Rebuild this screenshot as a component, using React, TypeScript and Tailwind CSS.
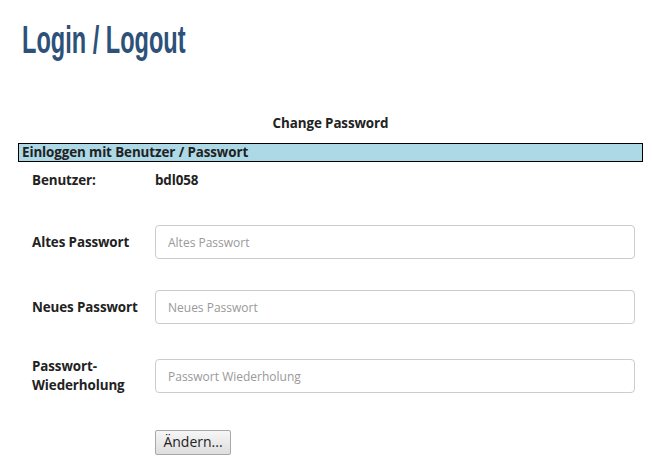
import React from "react";

const label = "font-['Open_Sans',sans-serif] font-bold text-[13.4px] text-[#222] tracking-[-0.1px]";

function Field({ lbl, ph, extra = "" }: { lbl: React.ReactNode; ph: string; extra?: string }) {
  return (
    <div className={`flex items-center ${extra}`}>
      <div className={`w-[137px] pl-[14px] leading-[19px] ${label}`}>{lbl}</div>
      <input
        type="text"
        placeholder={ph}
        className="w-[480px] h-[34px] border border-[#cccccc] rounded-[4px] px-[12px] font-['Open_Sans',sans-serif] text-[12px] text-[#555] placeholder:text-[#999] bg-white outline-none"
      />
    </div>
  );
}

export default function App() {
  return (
    <div className="bg-white w-[652px] h-[474px] overflow-hidden">
      <div className="pl-[22px] pt-[18px] h-[70px]">
        <h1 className="inline-block origin-left scale-x-[0.62] whitespace-nowrap font-['Liberation_Sans',sans-serif] font-bold text-[38px] leading-[44px] text-[#2d5178]">
          Login / Logout
        </h1>
      </div>
      <div className="ml-[18px] w-[625px] mt-[44px]">
        <div className={`text-center ${label} leading-[18px]`}>Change Password</div>
        <div className={`mt-[11px] h-[19px] bg-[#add8e6] border border-black pl-[3px] leading-[16px] ${label}`}>
          Einloggen mit Benutzer / Passwort
        </div>
        <div className="flex mt-[9px]">
          <div className={`w-[137px] pl-[14px] leading-[18px] ${label}`}>Benutzer:</div>
          <div className={`leading-[18px] ${label}`}>bdl058</div>
        </div>
        <div className="mt-[36px] flex flex-col gap-[31px]">
          <Field lbl="Altes Passwort" ph="Altes Passwort" />
          <Field lbl="Neues Passwort" ph="Neues Passwort" />
          <Field lbl={<>Passwort-<br />Wiederholung</>} ph="Passwort Wiederholung" extra="mt-[2px]" />
        </div>
        <div className="pl-[137px] mt-[34px]">
          <button className="h-[25px] w-[76px] border border-[#a8a8a8] rounded-[2px] bg-gradient-to-b from-[#f6f6f6] to-[#dedede] font-['Open_Sans',sans-serif] text-[14px] text-[#222] leading-[20px]">
            Ändern...
          </button>
        </div>
      </div>
    </div>
  );
}
